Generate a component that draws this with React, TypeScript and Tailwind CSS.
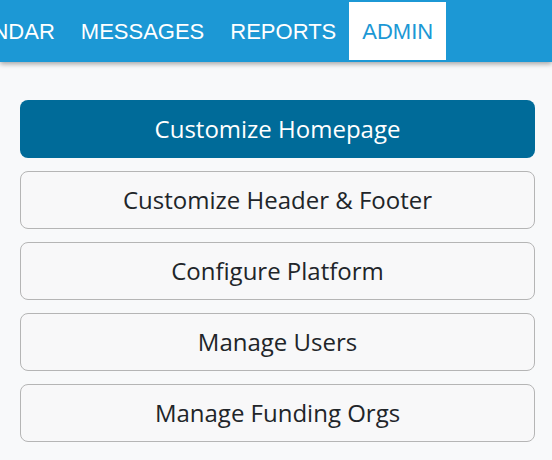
import React from "react";

const navItems = ["CALENDAR", "MESSAGES", "REPORTS"];
const buttons = [
  "Customize Header & Footer",
  "Configure Platform",
  "Manage Users",
  "Manage Funding Orgs",
];

export default function App() {
  return (
    <div className="min-h-[460px] w-[552px] overflow-hidden bg-[#f8f9fa]">
      <header className="relative z-10 h-[62px] bg-[#1c98d5] shadow-[0_2px_5px_rgba(0,0,0,0.35)] overflow-hidden">
        <nav className="flex h-full items-start pt-[2px] ml-[-78px] whitespace-nowrap font-['Liberation_Sans',Arial,sans-serif] text-[22px]">
          {navItems.map((n) => (
            <div key={n} className="flex h-[58px] items-center px-[13px] text-white">
              {n}
            </div>
          ))}
          <div className="flex h-[58px] items-center px-[13px] bg-white text-[#1c98d5]">
            ADMIN
          </div>
        </nav>
      </header>
      <main className="flex flex-col gap-[13px] pl-5 pr-[17px] pt-[38px] font-['Open_Sans','Noto_Sans',sans-serif] text-[24px]">
        <button className="flex h-[58px] items-center justify-center rounded-[8px] bg-[#006b99] text-white">
          Customize Homepage
        </button>
        {buttons.map((b) => (
          <button
            key={b}
            className="flex h-[58px] items-center justify-center rounded-[8px] border border-[#b5b5b5] bg-[#f8f8f9] text-[#212529]"
          >
            {b}
          </button>
        ))}
      </main>
    </div>
  );
}
